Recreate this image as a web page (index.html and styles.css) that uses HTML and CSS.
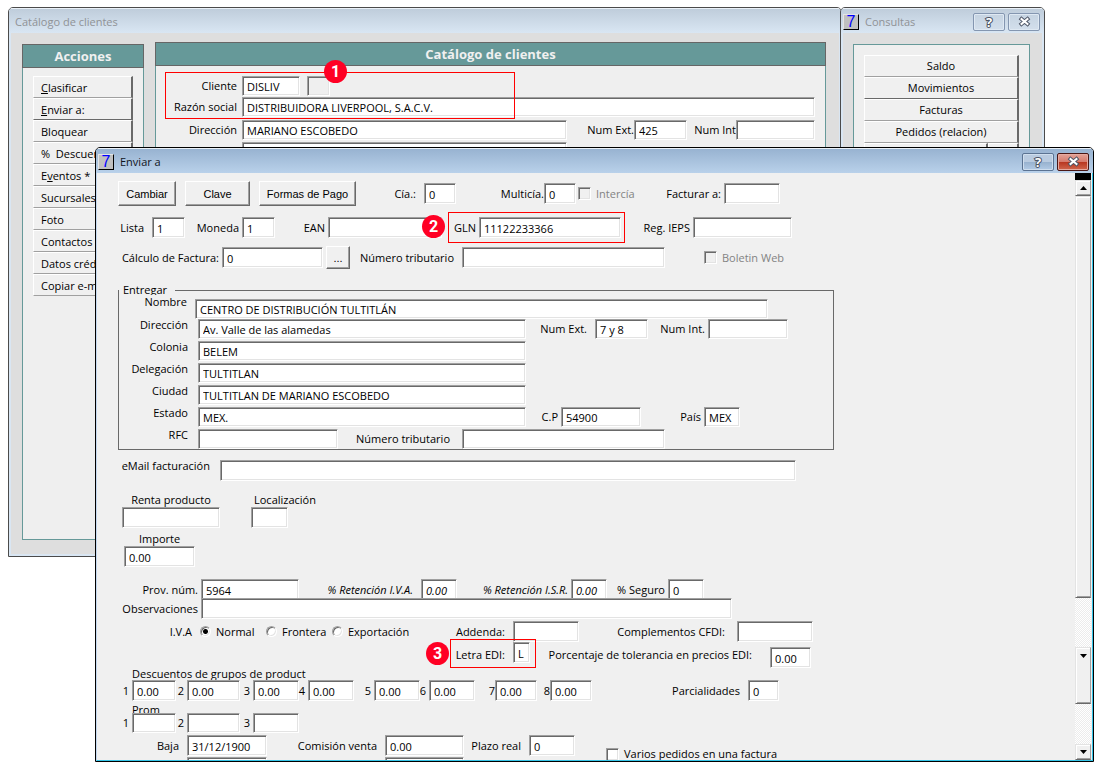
FILE: index.html
```
<!DOCTYPE html>
<html lang="es">
<head>
  <meta charset="utf-8" />
  <title>Catálogo de clientes</title>
  <link rel="stylesheet" href="styles.css">
</head>
<body>
  <div class="desktop">

    <section class="window catalogo">
      <div class="titlebar"><span class="title">Catálogo de clientes</span></div>
      <div class="window-body">
        <div class="panel acciones">
          <h2>Acciones</h2>
          <div class="menu">
            <button type="button"><u>C</u>lasificar</button>
            <button type="button"><u>E</u>nviar a:</button>
            <button type="button">Bloquear</button>
            <button type="button">%&nbsp; Descuentos</button>
            <button type="button">E<u>v</u>entos *</button>
            <button type="button">Sucursales</button>
            <button type="button">Foto</button>
            <button type="button">Contactos</button>
            <button type="button">Datos crédito</button>
            <button type="button">Copiar e-mail</button>
          </div>
        </div>
        <div class="panel cliente">
          <h2>Catálogo de clientes</h2>
          <form class="ficha">
            <div class="row r-cliente">
              <label for="cliente">Cliente</label>
              <input type="text" id="cliente" value="DISLIV">
              <input type="text" class="gris" aria-label="Estatus" disabled>
            </div>
            <div class="row r-razon">
              <label for="razon">Razón social</label>
              <input type="text" id="razon" value="DISTRIBUIDORA LIVERPOOL, S.A.C.V.">
            </div>
            <div class="row r-dir">
              <label for="dir">Dirección</label>
              <input type="text" id="dir" value="MARIANO ESCOBEDO">
              <label for="ext" class="p0">Num Ext.</label>
              <input type="text" id="ext" value="425">
              <label for="int" class="p0">Num Int</label>
              <input type="text" id="int">
            </div>
            <div class="row r-dir">
              <label for="col">Colonia</label>
              <input type="text" id="col">
            </div>
          </form>
          <div class="mark mark-cliente"></div>
          <span class="badge badge-1">1</span>
        </div>
      </div>
    </section>

    <section class="window consultas">
      <div class="titlebar">
        <span class="logo">7</span>
        <span class="title">Consultas</span>
        <button type="button" class="tb" aria-label="Ayuda"><span class="ayuda">?</span></button>
        <button type="button" class="tb" aria-label="Cerrar">
          <svg width="13" height="11" viewBox="0 0 13 11"><path d="M3.500 3L9.500 8M9.500 3L3.500 8" stroke="#4d5566" stroke-width="4" stroke-linecap="square"/><path d="M3.500 3L9.500 8M9.500 3L3.500 8" stroke="#fff" stroke-width="2" stroke-linecap="square"/></svg>
        </button>
      </div>
      <div class="window-body">
        <div class="panel">
          <div class="menu">
            <button type="button">Saldo</button>
            <button type="button">Movimientos</button>
            <button type="button">Facturas</button>
            <button type="button">Pedidos (relacion)</button>
            <div class="doble"><button type="button"></button><button type="button"></button></div>
          </div>
        </div>
      </div>
    </section>

    <section class="window enviar">
      <div class="titlebar">
        <span class="logo">7</span>
        <span class="title">Enviar a</span>
        <button type="button" class="tb" aria-label="Ayuda"><span class="ayuda">?</span></button>
        <button type="button" class="tb cerrar" aria-label="Cerrar">
          <svg width="13" height="11" viewBox="0 0 13 11"><path d="M3.500 3L9.500 8M9.500 3L3.500 8" stroke="#4d5566" stroke-width="4" stroke-linecap="square"/><path d="M3.500 3L9.500 8M9.500 3L3.500 8" stroke="#fff" stroke-width="2" stroke-linecap="square"/></svg>
        </button>
      </div>
      <div class="window-body">
        <form class="envio">
          <div class="row r-botones">
            <button type="button" class="btn">Cambiar</button>
            <button type="button" class="btn">Clave</button>
            <button type="button" class="btn">Formas de Pago</button>
            <label for="cia" class="p8">Cía.:</label>
            <input type="text" id="cia" value="0">
            <label for="multicia" class="p0">Multicía.</label>
            <input type="text" id="multicia" value="0">
            <span class="check off"><input type="checkbox" id="intercia" disabled><label for="intercia">Intercía</label></span>
            <label for="facturar">Facturar a:</label>
            <input type="text" id="facturar">
          </div>
          <div class="row r-lista">
            <label for="lista" class="p8">Lista</label>
            <input type="text" id="lista" value="1">
            <label for="moneda">Moneda</label>
            <input type="text" id="moneda" value="1">
            <label for="ean">EAN</label>
            <input type="text" id="ean">
            <label for="gln">GLN</label>
            <input type="text" id="gln" value="11122233366">
            <label for="ieps">Reg. IEPS</label>
            <input type="text" id="ieps">
          </div>
          <div class="row r-calculo">
            <label for="calculo">Cálculo de Factura:</label>
            <input type="text" id="calculo" value="0">
            <button type="button" class="btn puntos">...</button>
            <label for="numtrib" class="p8">Número tributario</label>
            <input type="text" id="numtrib">
            <span class="check off"><input type="checkbox" id="boletin" disabled><label for="boletin">Boletin Web</label></span>
          </div>

          <fieldset>
            <legend>Entregar</legend>
            <div class="row r-nombre">
              <label for="nombre" class="p8">Nombre</label>
              <input type="text" id="nombre" value="CENTRO DE DISTRIBUCIÓN TULTITLÁN">
            </div>
            <div class="row r-direccion">
              <label for="direccion" class="campo">Dirección</label>
              <input type="text" id="direccion" value="Av. Valle de las alamedas">
              <label for="numext" class="p8">Num Ext.</label>
              <input type="text" id="numext" value="7 y 8">
              <label for="numint">Num Int.</label>
              <input type="text" id="numint">
            </div>
            <div class="row r-direccion">
              <label for="colonia" class="campo">Colonia</label>
              <input type="text" id="colonia" value="BELEM">
            </div>
            <div class="row r-direccion">
              <label for="delegacion" class="campo">Delegación</label>
              <input type="text" id="delegacion" value="TULTITLAN">
            </div>
            <div class="row r-direccion">
              <label for="ciudad" class="campo">Ciudad</label>
              <input type="text" id="ciudad" value="TULTITLAN DE MARIANO ESCOBEDO">
            </div>
            <div class="row r-estado">
              <label for="estado" class="campo">Estado</label>
              <input type="text" id="estado" value="MEX.">
              <label for="cp">C.P</label>
              <input type="text" id="cp" value="54900">
              <label for="pais">País</label>
              <input type="text" id="pais" value="MEX">
            </div>
            <div class="row r-rfc">
              <label for="rfc" class="campo">RFC</label>
              <input type="text" id="rfc">
              <label for="numtrib2" class="p12">Número tributario</label>
              <input type="text" id="numtrib2">
            </div>
          </fieldset>

          <div class="row r-email">
            <label for="email" class="campo">eMail facturación</label>
            <input type="text" id="email">
          </div>
          <div class="bloques">
            <div class="bloque renta">
              <label for="renta">Renta producto</label>
              <input type="text" id="renta">
            </div>
            <div class="bloque localizacion">
              <label for="localizacion">Localización</label>
              <input type="text" id="localizacion">
            </div>
          </div>
          <div class="bloque importe">
            <label for="importe">Importe</label>
            <input type="text" id="importe" value="0.00">
          </div>

          <div class="row r-prov">
            <label for="prov">Prov. núm.</label>
            <input type="text" id="prov" value="5964">
            <label for="retiva" class="cursiva p8">% Retención I.V.A.</label>
            <input type="text" id="retiva" class="cursiva" value="0.00">
            <label for="retisr" class="cursiva">% Retención I.S.R.</label>
            <input type="text" id="retisr" class="cursiva" value="0.00">
            <label for="seguro">% Seguro</label>
            <input type="text" id="seguro" value="0">
          </div>
          <div class="row r-obs">
            <label for="obs">Observaciones</label>
            <input type="text" id="obs">
          </div>
          <div class="row r-iva">
            <span class="texto p8">I.V.A</span>
            <span class="check"><input type="radio" name="iva" id="normal" checked><label for="normal">Normal</label></span>
            <span class="check"><input type="radio" name="iva" id="frontera"><label for="frontera">Frontera</label></span>
            <span class="check"><input type="radio" name="iva" id="exportacion"><label for="exportacion">Exportación</label></span>
            <label for="addenda" class="p8">Addenda:</label>
            <input type="text" id="addenda">
            <label for="complementos" class="p12">Complementos CFDI:</label>
            <input type="text" id="complementos">
          </div>
          <div class="row r-letra">
            <label for="letra" class="p8">Letra EDI:</label>
            <input type="text" id="letra" value="L">
            <label for="tolerancia" class="p18">Porcentaje de tolerancia en precios EDI:</label>
            <input type="text" id="tolerancia" value="0.00">
          </div>

          <div class="rotulo">Descuentos de grupos de product</div>
          <div class="row r-descuentos">
            <label for="d1">1</label><input type="text" id="d1" value="0.00">
            <label for="d2">2</label><input type="text" id="d2" value="0.00">
            <label for="d3">3</label><input type="text" id="d3" value="0.00">
            <label for="d4">4</label><input type="text" id="d4" value="0.00">
            <label for="d5">5</label><input type="text" id="d5" value="0.00">
            <label for="d6">6</label><input type="text" id="d6" value="0.00">
            <label for="d7" class="p0">7</label><input type="text" id="d7" value="0.00">
            <label for="d8" class="p0">8</label><input type="text" id="d8" value="0.00">
            <label for="parcialidades" class="p8">Parcialidades</label>
            <input type="text" id="parcialidades" value="0">
          </div>
          <div class="rotulo prom">Prom</div>
          <div class="row r-prom">
            <label for="p1">1</label><input type="text" id="p1">
            <label for="p2">2</label><input type="text" id="p2">
            <label for="p3">3</label><input type="text" id="p3">
          </div>
          <div class="row r-baja">
            <label for="baja" class="p8">Baja</label>
            <input type="text" id="baja" value="31/12/1900">
            <label for="comision" class="p8">Comisión venta</label>
            <input type="text" id="comision" value="0.00">
            <label for="plazo" class="p8">Plazo real</label>
            <input type="text" id="plazo" value="0">
            <span class="check"><input type="checkbox" id="varios"><label for="varios">Varios pedidos en una factura</label></span>
          </div>
          <div class="row r-ultima">
            <input type="text" aria-label="Fecha">
            <input type="text" aria-label="Comisión">
          </div>

          <div class="mark mark-gln"></div>
          <span class="badge badge-2">2</span>
          <div class="mark mark-letra"></div>
          <span class="badge badge-3">3</span>
        </form>

        <div class="scrollbar">
          <div class="tope"></div>
          <button type="button" aria-label="Subir"><svg width="7" height="4" viewBox="0 0 7 4"><path d="M3.500 0L7 4H0z"/></svg></button>
          <div class="thumb grande"></div>
          <div class="pista"></div>
          <div class="thumb chico"><svg width="7" height="4" viewBox="0 0 7 4"><path d="M0 0H7L3.500 4z"/></svg></div>
          <div class="pista"></div>
          <button type="button" aria-label="Bajar"><svg width="7" height="4" viewBox="0 0 7 4"><path d="M0 0H7L3.500 4z"/></svg></button>
        </div>
      </div>
    </section>

  </div>
</body>
</html>
```

FILE: styles.css
```
* {
  box-sizing: border-box;
}
body {
  margin: 0;
  background: #fff;
  color: #000;
  font-family: "Open Sans", "Noto Sans", sans-serif;
  font-size: 11px;
  line-height: 14px;
}
input, button {
  margin: 0;
  font: inherit;
  color: inherit;
}
.desktop {
  position: relative;
  height: 100vh;
  min-height: 771px;
  overflow: hidden;
}

/* ventanas */
.window {
  position: absolute;
  display: flex;
  flex-direction: column;
  border: 1px solid #4b4b4b;
  border-radius: 5px 5px 0 0;
  overflow: hidden;
}
.catalogo {
  left: 8px;
  right: 260px;
  top: 7px;
  bottom: 214px;
}
.consultas {
  right: 57px;
  width: 205px;
  top: 7px;
  bottom: 214px;
}
.enviar {
  left: 95px;
  right: 8px;
  top: 147px;
  bottom: 9px;
  border-color: #000;
}
.titlebar {
  display: flex;
  align-items: center;
  flex: none;
  gap: 3px;
  height: 25px;
  padding: 1px 4px 0 2px;
  background: linear-gradient(#bfcddb, #d9e6f3);
  border-top: 1px solid #eaf1f8;
  color: #8f9296;
}
.title {
  flex: 1;
  padding-left: 3px;
}
.catalogo .title {
  padding-left: 4px;
}
.enviar .titlebar {
  background: linear-gradient(#98b3d1, #b9d1ea);
  color: #10151c;
}
.logo {
  width: 16px;
  height: 16px;
  border: 1px solid #e4e4e4;
  border-right-color: #000;
  border-bottom-color: #000;
  background: #c0c0c0;
  color: #00f;
  font: 16px/14px "Liberation Sans", Arial, sans-serif;
  text-align: center;
}
.tb {
  display: flex;
  align-items: center;
  justify-content: center;
  width: 32px;
  height: 18px;
  padding: 0;
  border: 1px solid #8496b0;
  border-radius: 2px;
  background: linear-gradient(#c5d3e1, #d3dfec);
  box-shadow: inset 0 0 0 1px #dfe9f3;
}
.enviar .tb {
  border-color: #5b7392;
  background: linear-gradient(#b9cbe0 50%, #97b1ce 50%, #b3cbe6);
  box-shadow: inset 0 0 0 1px #cfdeee;
}
.enviar .tb.cerrar {
  border-color: #4a1715;
  background: linear-gradient(#e4a398, #d5796b 50%, #b8351f 50%, #d0674e);
  box-shadow: inset 0 0 0 1px #e6aaa0;
}
.ayuda {
  color: #fff;
  font: bold 13px/14px "Open Sans", sans-serif;
  -webkit-text-stroke: 2px #4d5566;
  paint-order: stroke fill;
}
.tb svg, .scrollbar svg {
  display: block;
  fill: none;
}
.window-body {
  display: flex;
  flex: 1;
  min-height: 0;
  background: #dedede;
  border: solid #d9e6f3;
  border-width: 0 2px 2px;
}
.catalogo .window-body {
  gap: 11px;
  padding: 9px 13px 14px 11px;
}
.consultas .window-body {
  padding: 11px 12px 14px 10px;
}
.enviar .window-body {
  padding-right: 1px;
  background: #f0f0f0;
  border-width: 0 1px 1px;
  border-color: #c3d8f0 #35c5e8 #35c5e8 #c3d8f0;
}

/* paneles */
.panel {
  position: relative;
  border: 1px solid #669999;
  background: #efefef;
}
.panel h2 {
  margin: -1px;
  height: 24px;
  border: 1px solid #666;
  background: #669999;
  color: #f0f0f0;
  font-size: 13px;
  line-height: 22px;
  text-align: center;
}
.acciones {
  width: 122px;
  margin-top: 2px;
}
.cliente, .consultas .panel {
  flex: 1;
}
.menu {
  display: flex;
  flex-direction: column;
  padding: 9px 10px;
  overflow: hidden;
}
.consultas .menu {
  padding-top: 10px;
}
.menu button {
  height: 22px;
  padding: 1px 0 0 7px;
  border: solid #a0a0a0;
  border-width: 1px 2px 1px 1px;
  border-color: #fff #696969 #a0a0a0 #fff;
  background: #f0f0f0;
  text-align: left;
  white-space: nowrap;
}
.menu button:nth-child(2) {
  border-bottom-color: #696969;
}
.consultas .menu button {
  padding: 0;
  text-align: center;
}
.doble {
  display: grid;
  grid-template-columns: 4fr 1fr;
}

/* campos */
.row {
  display: grid;
  align-items: center;
}
label, .texto {
  justify-self: end;
  padding-right: 3px;
  white-space: nowrap;
}
.p0 { padding-right: 0; }
.p8 { padding-right: 8px; }
.p12 { padding-right: 12px; }
.p18 { padding-right: 18px; }
.campo { padding-right: 10px; }
input[type="text"] {
  width: 100%;
  height: 21px;
  padding: 1px 0 0 4px;
  border: 1px solid;
  border-color: #a0a0a0 #fff #fff #a0a0a0;
  border-radius: 0;
  background: #fff;
  box-shadow: inset 1px 1px #696969, inset -1px -1px #e3e3e3;
  outline: none;
}
input.gris {
  background: #efefef;
}
.cursiva {
  font-style: italic;
}
.check {
  display: flex;
  align-items: center;
  gap: 5px;
}
.check.off {
  color: #838383;
}
.check label {
  padding: 0;
}
input[type="checkbox"], input[type="radio"] {
  appearance: none;
  flex: none;
  width: 13px;
  height: 13px;
  border: 1px solid;
  border-color: #a0a0a0 #fff #fff #a0a0a0;
  background: #fff;
  box-shadow: inset 1px 1px #696969, inset -1px -1px #e3e3e3;
}
input[type="checkbox"]:disabled {
  background: #f0f0f0;
}
input[type="radio"] {
  width: 11px;
  height: 11px;
  border-radius: 50%;
}
input[type="radio"]:checked {
  background: radial-gradient(#000 2px, #fff 3px);
}
.btn {
  height: 25px;
  margin-right: 9px;
  padding: 0;
  border: 1px solid;
  border-color: #fff #696969 #696969 #fff;
  background: #f0f0f0;
  box-shadow: inset -1px -1px #a0a0a0;
  font-family: "Liberation Sans", Arial, sans-serif;
}
.btn.puntos {
  height: 23px;
  margin: 0 0 0 3px;
}

/* ficha del cliente */
.ficha {
  padding: 11px 10px 0;
}
.ficha label {
  padding-right: 5px;
}
.ficha .p0 {
  padding-right: 0;
}
.ficha input[type="text"] {
  height: 20px;
}
.r-cliente {
  grid-template-columns: 76px 58px 30px;
}
.r-cliente .gris {
  justify-self: end;
  width: 23px;
}
.r-razon {
  grid-template-columns: 76px 1fr;
  margin: 1px 0 3px;
}
.r-dir {
  grid-template-columns: 76px 325px 67px 53px 49px 1fr;
  margin-bottom: 2px;
}

/* enviar a */
.envio {
  position: relative;
  flex: 1;
  padding: 8px 0 0 21px;
  overflow: hidden;
}
.r-botones {
  grid-template-columns: 67px 74px 106px 59px 32px 88px 32px 61px 87px 56px;
}
.r-botones .check {
  padding-left: 2px;
}
.r-lista {
  grid-template-columns: 34px 33px 57px 33px 53px 114px 37px 142px 72px 99px;
  margin-top: 11px;
}
.r-calculo {
  grid-template-columns: 104px 101px 27px 112px 203px 1fr;
  margin-top: 8px;
}
.r-calculo .check {
  padding-left: 39px;
}
fieldset {
  width: 716px;
  min-width: 0;
  margin: 14px 0 0;
  padding: 0;
  border: 1px solid #696969;
}
legend {
  padding: 0 8px 0 4px;
}
fieldset input[type="text"] {
  height: 20px;
}
fieldset .row {
  margin-bottom: 2px;
}
fieldset .row:last-child {
  margin-bottom: 0;
}
fieldset .r-nombre {
  grid-template-columns: 76px 573px;
  align-items: end;
  height: 24px;
  margin: -2px 0 0;
}
.r-nombre label {
  align-self: start;
  background: #f0f0f0;
}
.campo {
  align-self: start;
  line-height: 11px;
}
.r-direccion {
  grid-template-columns: 79px 328px 69px 53px 60px 80px;
}
.r-estado {
  grid-template-columns: 79px 328px 35px 80px 63px 36px;
}
.r-rfc {
  grid-template-columns: 79px 140px 124px 203px;
}
.r-email {
  grid-template-columns: 102px 576px;
  margin-top: 10px;
}
.bloques {
  display: flex;
  gap: 31px;
  margin: 11px 0 0 4px;
}
.bloque label {
  display: block;
  justify-self: stretch;
  padding: 0;
  line-height: 15px;
  text-align: center;
}
.bloque input {
  display: block;
}
.renta {
  width: 98px;
}
.localizacion {
  width: 65px;
}
.localizacion label {
  padding-left: 3px;
  text-align: left;
}
.localizacion input[type="text"] {
  width: 37px;
}
.importe {
  width: 71px;
  margin: 3px 0 0 6px;
}
.r-prov {
  grid-template-columns: 83px 98px 122px 36px 114px 36px 61px 36px;
  margin-top: 12px;
}
.r-obs {
  grid-template-columns: 83px 531px;
  margin-top: -2px;
}
.r-iva {
  grid-template-columns: 82px 66px 66px 80px 101px 66px 158px 76px;
  margin-top: 2px;
}
.r-letra {
  grid-template-columns: 395px 17px 240px 41px;
  height: 26px;
}
#letra {
  align-self: start;
}
#tolerancia {
  align-self: end;
}
.rotulo {
  height: 13px;
  margin-top: -1px;
  padding-left: 14px;
  overflow: hidden;
}
.rotulo.prom {
  height: 10px;
  margin-top: 2px;
}
.r-descuentos {
  grid-template-columns: 14px 44px 11px 53px 13px 46px 9px 46px 20px 46px 9px 46px 20px 42px 13px 42px 156px 31px;
}
.r-prom {
  grid-template-columns: 14px 44px 11px 53px 13px 46px;
}
.r-prom input[type="text"] {
  height: 20px;
}
.r-baja {
  grid-template-columns: 69px 80px 118px 79px 65px 46px 1fr;
  height: 26px;
  margin-top: 2px;
  align-items: start;
}
.r-baja label {
  line-height: 21px;
}
.r-baja .check {
  align-self: end;
  padding-left: 31px;
}
.r-baja .check label {
  line-height: 14px;
}
.r-ultima {
  grid-template-columns: 80px 79px;
  column-gap: 118px;
  margin-top: -4px;
  padding-left: 69px;
}

/* barra de desplazamiento */
.scrollbar {
  display: flex;
  flex-direction: column;
  width: 16px;
}
.tope {
  height: 7px;
  background: #000;
}
.scrollbar button, .thumb {
  display: flex;
  justify-content: center;
  flex: none;
  border: 1px solid;
  border-color: #e3e3e3 #a0a0a0 #696969 #e3e3e3;
  background: #f0f0f0;
  box-shadow: inset 1px 1px #fff, inset 0 -1px #a0a0a0;
}
.scrollbar button {
  align-items: center;
  width: 16px;
  height: 16px;
  padding: 0;
}
.scrollbar svg {
  fill: #000;
}
.thumb.grande {
  flex: 1;
}
.thumb.chico {
  height: 57px;
  padding-top: 6px;
}
.pista {
  height: 49px;
  background: repeating-conic-gradient(#fff 0 25%, #ececec 0 50%) 0 0 / 2px 2px;
}
.thumb.chico + .pista {
  height: 40px;
}

/* señales numeradas */
.mark {
  position: absolute;
  border: 1px solid #f00;
  pointer-events: none;
}
.badge {
  position: absolute;
  width: 23px;
  height: 23px;
  border-radius: 50%;
  background: #ff0024;
  color: #fff;
  font: bold 16px/23px Roboto, sans-serif;
  text-align: center;
}
.mark-cliente {
  left: 9px;
  top: 29px;
  width: 350px;
  height: 47px;
}
.badge-1 {
  left: 168px;
  top: 17px;
}
.mark-gln {
  left: 351px;
  top: 39px;
  width: 177px;
  height: 31px;
}
.badge-2 {
  left: 325px;
  top: 42px;
}
.mark-letra {
  left: 353px;
  top: 466px;
  width: 86px;
  height: 29px;
}
.badge-3 {
  left: 329px;
  top: 469px;
}
```
